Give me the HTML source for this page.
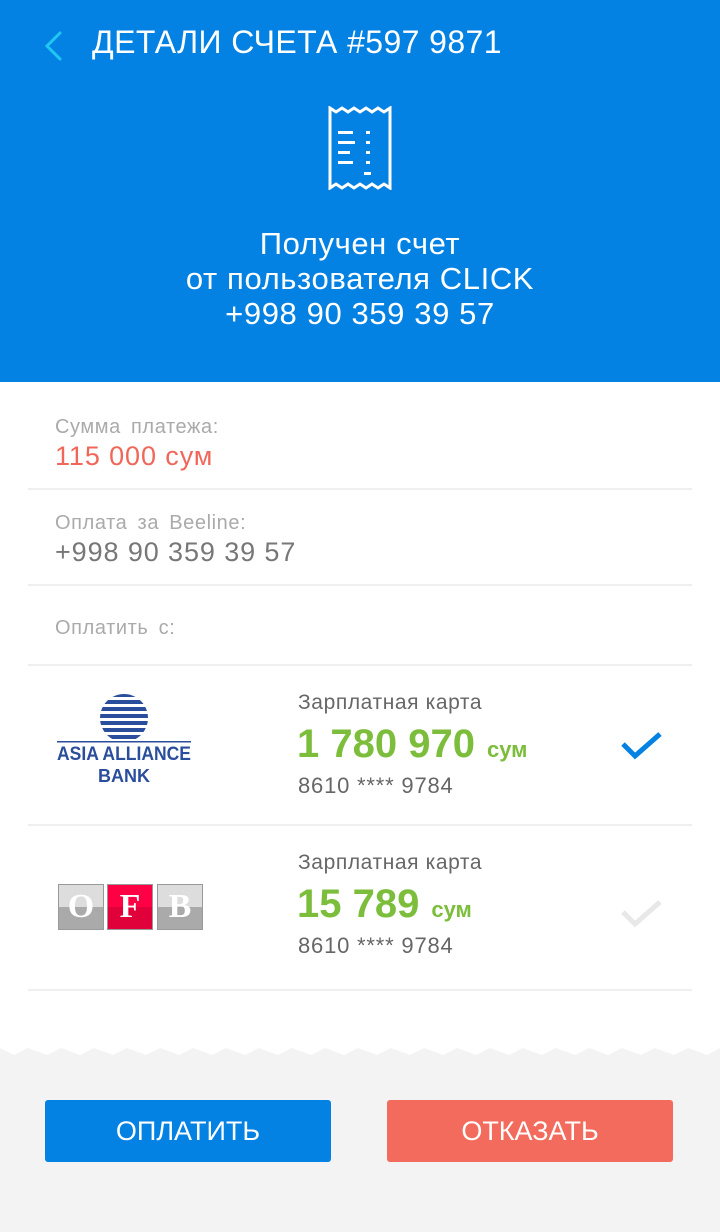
<!DOCTYPE html>
<html><head><meta charset="utf-8"><style>
*{margin:0;padding:0;box-sizing:border-box}
body{width:720px;height:1232px;position:relative;background:#fff;font-family:"Liberation Sans",sans-serif;overflow:hidden}
.hdr{position:absolute;left:0;top:0;width:720px;height:382px;background:#0382e4;color:#fff}
.t{position:absolute;left:92px;top:24px;font-size:32px;letter-spacing:0.4px}
.c{position:absolute;top:226px;width:720px;text-align:center;font-size:31px;line-height:35px;letter-spacing:0.6px}
.lbl{position:absolute;left:55px;font-size:20px;color:#aaa;letter-spacing:0.6px;word-spacing:4px}
.val{position:absolute;left:55px;font-size:27px;color:#777;letter-spacing:0.9px}
.ln{position:absolute;left:28px;width:664px;height:2px;background:#efefef}
.ct{position:absolute;left:298px;font-size:21px;color:#666;letter-spacing:0.6px}
.am{position:absolute;left:297px;font-size:40px;color:#7cbe3c;font-weight:bold}
.am span{font-size:22px;font-weight:bold;margin-left:12px}
.num{position:absolute;left:298px;font-size:22px;color:#666;letter-spacing:0.8px}
.btn{position:absolute;top:1100px;width:286px;height:62px;border-radius:3px;color:#fff;font-size:27px;text-align:center;line-height:62px}
.sq{position:absolute;top:884px;width:46px;height:46px;border:1px solid #999;font-family:"Liberation Serif",serif;font-weight:bold;font-size:34px;color:#fff;text-align:center;line-height:44px}
</style></head><body>
<div class="hdr">
<svg style="position:absolute;left:40px;top:30px" width="24" height="32"><path d="M20 3 L7 16 L20 29" stroke="#1ec8f0" stroke-width="3" fill="none" stroke-linecap="round"/></svg>
<div class="t">ДЕТАЛИ СЧЕТА #597 9871</div>
<svg style="position:absolute;left:328px;top:106px" width="66" height="84" viewBox="0 0 66 84">
<path d="M2 2 L8 6 L14 2 L20 6 L26 2 L32 6 L38 2 L44 6 L50 2 L56 6 L62 2 V82 L56 78 L50 82 L44 78 L38 82 L32 78 L26 82 L20 78 L14 82 L8 78 L2 82 Z" stroke="#fff" stroke-width="3" fill="none"/>
<g fill="#fff"><rect x="10" y="25" width="15" height="3"/><rect x="10" y="35" width="17" height="3"/><rect x="10" y="45" width="12" height="3"/><rect x="10" y="55" width="15" height="3"/>
<rect x="38" y="25" width="4" height="3"/><rect x="38" y="35" width="4" height="3"/><rect x="38" y="45" width="4" height="3"/><rect x="38" y="55" width="4" height="3"/><rect x="36" y="66" width="7" height="3"/></g></svg>
<div class="c">Получен счет<br>от пользователя CLICK<br>+998 90 359 39 57</div>
</div>
<div class="lbl" style="top:416px">Сумма  платежа:</div>
<div class="val" style="top:441px;color:#f0675a">115 000 сум</div>
<div class="ln" style="top:488px"></div>
<div class="lbl" style="top:512px">Оплата за Beeline:</div>
<div class="val" style="top:537px">+998 90 359 39 57</div>
<div class="ln" style="top:584px"></div>
<div class="lbl" style="top:617px">Оплатить с:</div>
<div class="ln" style="top:664px"></div>
<svg style="position:absolute;left:56px;top:694px" width="140" height="92">
<defs><clipPath id="cc"><circle cx="68" cy="24" r="24"/></clipPath></defs>
<g clip-path="url(#cc)" fill="#2a4d9c"><rect x="40" y="0" width="60" height="3"/><rect x="40" y="6" width="60" height="4"/><rect x="40" y="13" width="60" height="4"/><rect x="40" y="20" width="60" height="4"/><rect x="40" y="27" width="60" height="4"/><rect x="40" y="34" width="60" height="4"/><rect x="40" y="41" width="60" height="4"/></g>
<rect x="1" y="47" width="134" height="1.5" fill="#2a4d9c"/>
<text x="68" y="66" text-anchor="middle" font-family="Liberation Sans" font-weight="bold" font-size="19" fill="#2a4d9c" textLength="134" lengthAdjust="spacingAndGlyphs">ASIA ALLIANCE</text>
<text x="68" y="88" text-anchor="middle" font-family="Liberation Sans" font-weight="bold" font-size="18" fill="#2a4d9c">BANK</text>
</svg>
<div class="ct" style="top:691px">Зарплатная карта</div>
<div class="am" style="top:722px">1 780 970<span>сум</span></div>
<div class="num" style="top:773px">8610 **** 9784</div>
<svg style="position:absolute;left:620px;top:730px" width="44" height="32"><path d="M3 14 L15 26 L40 4" stroke="#0382e4" stroke-width="5" fill="none"/></svg>
<div class="ln" style="top:824px"></div>
<div class="sq" style="left:58px;background:linear-gradient(#ddd 50%,#aaa 50%)">O</div>
<div class="sq" style="left:107px;background:linear-gradient(#f04 50%,#e0003a 50%)">F</div>
<div class="sq" style="left:157px;background:linear-gradient(#ddd 50%,#aaa 50%)">B</div>
<div class="ct" style="top:851px">Зарплатная карта</div>
<div class="am" style="top:882px">15 789<span>сум</span></div>
<div class="num" style="top:933px">8610 **** 9784</div>
<svg style="position:absolute;left:620px;top:898px" width="44" height="32"><path d="M3 14 L15 26 L40 4" stroke="#e8e8e8" stroke-width="5" fill="none"/></svg>
<div class="ln" style="top:989px"></div>
<svg style="position:absolute;left:0;top:1044px" width="720" height="188"><path d="M0 4 L14 11 L28 4 L47 11 L61 4 L80 11 L94 4 L113 11 L127 4 L146 11 L160 4 L179 11 L193 4 L212 11 L226 4 L245 11 L259 4 L278 11 L292 4 L311 11 L325 4 L344 11 L358 4 L377 11 L391 4 L410 11 L424 4 L443 11 L457 4 L476 11 L490 4 L509 11 L523 4 L542 11 L556 4 L575 11 L589 4 L608 11 L622 4 L641 11 L655 4 L674 11 L688 4 L707 11 L720 4 V188 H0 Z" fill="#f3f3f3"/></svg>
<div class="btn" style="left:45px;background:#0382e4">ОПЛАТИТЬ</div>
<div class="btn" style="left:387px;background:#f36b5c">ОТКАЗАТЬ</div>
</body></html>
